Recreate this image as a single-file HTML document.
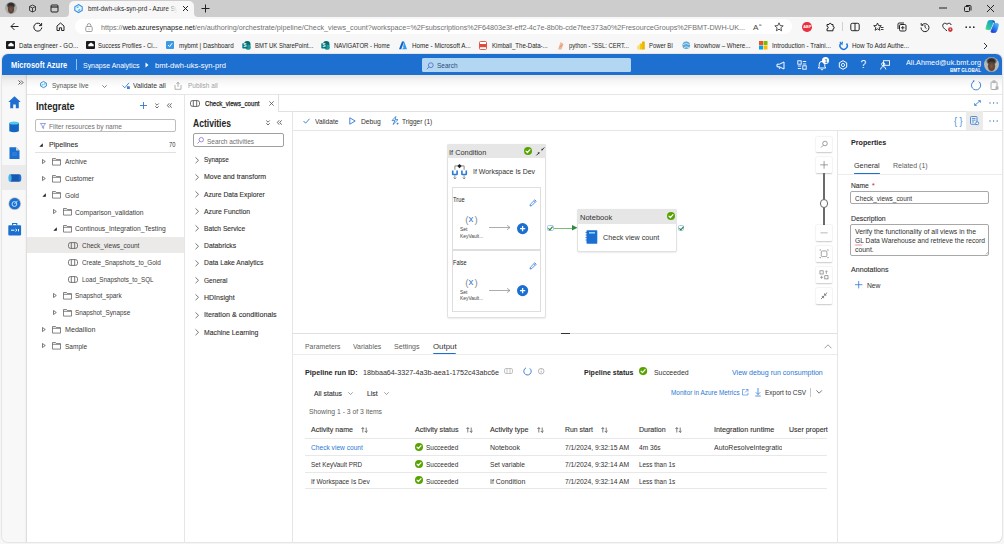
<!DOCTYPE html>
<html><head><meta charset="utf-8"><style>
html,body{margin:0;padding:0;}
body{width:1004px;height:544px;position:relative;overflow:hidden;background:#f7f7f7;font-family:"Liberation Sans",sans-serif;}
span{position:absolute;white-space:pre;}
svg{overflow:visible}
</style></head><body>
<div style="position:absolute;left:0px;top:0px;width:1004px;height:16.5px;background:#cdcdcd;"></div>
<div style="position:absolute;left:64px;top:12px;width:135px;height:5px;background:#f7f7f7;"></div>
<div style="position:absolute;left:60px;top:8px;width:9.2px;height:8.5px;background:#cdcdcd;border-bottom-right-radius:4px"></div>
<div style="position:absolute;left:194px;top:8px;width:9.2px;height:8.5px;background:#cdcdcd;border-bottom-left-radius:4px"></div>
<div style="position:absolute;left:69.2px;top:1px;width:124.8px;height:16px;background:#f7f7f7;border-radius:5px 5px 0 0"></div>
<div style="position:absolute;left:5px;top:2px;width:12px;height:12px;border-radius:50%;background:radial-gradient(ellipse 30% 40% at 50% 62%,#7a5a48 0,#5a4032 70%,rgba(90,64,50,0) 100%),radial-gradient(ellipse 40% 30% at 50% 28%,#222 0,#333 60%,rgba(50,50,50,0) 100%),#a9aca9"></div>
<svg style="position:absolute;left:28px;top:4px;" width="9" height="9" viewBox="0 0 9 9" fill="none"><path d="M1.5 2.5 L4.5 1 L7.5 2.5 L7.5 6.5 L4.5 8 L1.5 6.5 Z M1.5 2.5 L4.5 4 L7.5 2.5 M4.5 4 L4.5 8" stroke="#333" stroke-width="0.9"/></svg>
<svg style="position:absolute;left:50px;top:4px;" width="9" height="9" viewBox="0 0 9 9" fill="none"><rect x="1" y="1" width="7" height="7" rx="1" stroke="#222" stroke-width="1"/><path d="M1 3 H8" stroke="#222" stroke-width="1.2"/></svg>
<svg style="position:absolute;left:73.8px;top:3.6px;" width="9" height="9.2" viewBox="0 0 9 9.2" fill="none"><path d="M4.5 0.6 L8.2 2.7 L8.2 6.5 L4.5 8.6 L0.8 6.5 L0.8 2.7 Z" stroke="#3b8fe0" stroke-width="1.1" fill="#e8f6fd"/><path d="M2.8 3.6 L4.6 2.8 M4.2 6.4 L6.2 5.4" stroke="#22b4ea" stroke-width="1.1"/></svg>
<svg style="position:absolute;left:182px;top:5px;" width="7" height="7" viewBox="0 0 7 7" fill="none"><path d="M1 1 L6 6 M6 1 L1 6" stroke="#222" stroke-width="1"/></svg>
<svg style="position:absolute;left:201px;top:4px;" width="9" height="9" viewBox="0 0 9 9" fill="none"><path d="M4.5 0.5 V8.5 M0.5 4.5 H8.5" stroke="#222" stroke-width="1"/></svg>
<svg style="position:absolute;left:938px;top:5px;" width="10" height="6" viewBox="0 0 10 6" fill="none"><path d="M1 3 H9" stroke="#222" stroke-width="1"/></svg>
<svg style="position:absolute;left:963px;top:4px;" width="9" height="9" viewBox="0 0 9 9" fill="none"><rect x="1.5" y="2.5" width="5" height="5" rx="1" stroke="#222" stroke-width="1"/><path d="M3 1.5 H7 Q8 1.5 8 2.5 V6.5" stroke="#222" stroke-width="1"/></svg>
<svg style="position:absolute;left:986px;top:4px;" width="9" height="9" viewBox="0 0 9 9" fill="none"><path d="M1 1 L8 8 M8 1 L1 8" stroke="#222" stroke-width="1"/></svg>
<svg style="position:absolute;left:10px;top:22px;" width="9" height="9" viewBox="0 0 9 9" fill="none"><path d="M8.5 4.5 H1 M4.5 1 L1 4.5 L4.5 8" stroke="#222" stroke-width="1"/></svg>
<svg style="position:absolute;left:33px;top:22px;" width="10" height="10" viewBox="0 0 10 10" fill="none"><path d="M8.3 3.2 A4 4 0 1 0 8.8 5.5" stroke="#222" stroke-width="1"/><path d="M8.6 1 V3.6 H6" stroke="#222" stroke-width="1"/></svg>
<svg style="position:absolute;left:56px;top:22px;" width="9" height="9" viewBox="0 0 9 9" fill="none"><path d="M1 4 L4.5 1 L8 4 V8.5 H5.6 V5.8 H3.4 V8.5 H1 Z" stroke="#222" stroke-width="1" stroke-linejoin="round"/></svg>
<div style="position:absolute;left:75.3px;top:19px;width:717px;height:15px;background:#ffffff;border-radius:8px"></div>
<svg style="position:absolute;left:85px;top:23px;" width="8" height="9" viewBox="0 0 8 9" fill="none"><rect x="0.8" y="3.5" width="6.4" height="5" rx="1" stroke="#888" stroke-width="0.8"/><path d="M2.2 3.5 V2.4 A1.8 1.8 0 0 1 5.8 2.4 V3.5" stroke="#888" stroke-width="0.8"/><circle cx="4" cy="6" r="0.5" fill="#888"/></svg>
<svg style="position:absolute;left:774px;top:22px;" width="10" height="10" viewBox="0 0 10 10" fill="none"><path d="M5 0.8 L6.2 3.6 L9.2 3.8 L6.9 5.8 L7.6 8.8 L5 7.2 L2.4 8.8 L3.1 5.8 L0.8 3.8 L3.8 3.6 Z" stroke="#444" stroke-width="0.9" stroke-linejoin="round"/></svg>
<div style="position:absolute;left:802px;top:22px;width:9.5px;height:9.5px;border-radius:50%;background:#e8313f"></div>
<svg style="position:absolute;left:825px;top:21.5px;" width="10" height="10" viewBox="0 0 10 10" fill="none"><path d="M2 2.5 H4 A1.2 1.2 0 0 1 6.4 2.5 H8 V4.5 A1.2 1.2 0 0 1 8 6.9 V8.8 H2 V6.8 A1.2 1.2 0 0 0 2 4.4 Z" stroke="#222" stroke-width="1"/></svg>
<div style="position:absolute;left:842px;top:22px;width:1px;height:9px;background:#d0d0d0;"></div>
<svg style="position:absolute;left:849.5px;top:22px;" width="10" height="10" viewBox="0 0 10 10" fill="none"><rect x="0.8" y="1.3" width="8.4" height="7.4" rx="1.5" stroke="#222" stroke-width="1"/><path d="M5 1.3 V8.7" stroke="#222" stroke-width="1"/></svg>
<svg style="position:absolute;left:873px;top:21.5px;" width="11" height="10" viewBox="0 0 11 10" fill="none"><path d="M4.5 1 L5.6 3.5 L8.3 3.7 L6.2 5.5 L6.9 8.3 L4.5 6.8 L2.1 8.3 L2.8 5.5 L0.7 3.7 L3.4 3.5 Z" stroke="#222" stroke-width="0.9" stroke-linejoin="round"/><path d="M7.5 5.5 H10.5 M8 7.5 H10.5" stroke="#222" stroke-width="0.9"/></svg>
<svg style="position:absolute;left:896.5px;top:21.5px;" width="10" height="10" viewBox="0 0 10 10" fill="none"><rect x="2.5" y="2.5" width="6.5" height="6.5" rx="1.3" stroke="#222" stroke-width="1"/><path d="M1 7 V2.2 Q1 1 2.2 1 H7" stroke="#222" stroke-width="1"/><path d="M5.75 4 V7.5 M4 5.75 H7.5" stroke="#222" stroke-width="0.9"/></svg>
<svg style="position:absolute;left:919.5px;top:21.5px;" width="10" height="10" viewBox="0 0 10 10" fill="none"><path d="M2 3 A4 4 0 1 1 1 5.5" stroke="#222" stroke-width="1"/><path d="M1.2 1 V3.3 H3.4" stroke="#222" stroke-width="0.9"/><path d="M5 3 V5.3 L6.5 6.5" stroke="#222" stroke-width="0.9"/></svg>
<svg style="position:absolute;left:942px;top:21.5px;" width="11" height="10" viewBox="0 0 11 10" fill="none"><path d="M5 8.8 C1 6 0.5 4.5 0.8 3 C1.2 1 3.6 0.6 5 2.3 C6.4 0.6 8.8 1 9.2 3" stroke="#222" stroke-width="1"/><circle cx="8.3" cy="7.6" r="2.3" fill="#d13438"/><path d="M8.3 6.5 V8 " stroke="#fff" stroke-width="0.8"/></svg>
<svg style="position:absolute;left:965px;top:25.5px;" width="10" height="3" viewBox="0 0 10 3" fill="none"><circle cx="1.2" cy="1.2" r="0.85" fill="#222"/><circle cx="5" cy="1.2" r="0.85" fill="#222"/><circle cx="8.8" cy="1.2" r="0.85" fill="#222"/></svg>
<svg style="position:absolute;left:985px;top:20px;" width="14" height="13" viewBox="0 0 14 13" fill="none"><defs><linearGradient id="cp1" x1="0.8" y1="0" x2="0.1" y2="1"><stop offset="0" stop-color="#1596d8"/><stop offset="1" stop-color="#3ad68c"/></linearGradient><linearGradient id="cp2" x1="0.9" y1="0.1" x2="0.2" y2="1"><stop offset="0" stop-color="#46b8f5"/><stop offset="0.6" stop-color="#2a72ec"/><stop offset="1" stop-color="#1a3fd0"/></linearGradient></defs><path d="M1.2 7.6 C0.6 9.2 1.4 9.6 2.6 9.6 H5.2 L8.2 2 C8.6 0.9 8.1 0.6 7.2 0.6 H4.6 C3.6 0.6 3.2 1 2.8 2.2 Z" fill="url(#cp1)" stroke="url(#cp1)" stroke-width="0.9"/><path d="M13.3 5.6 C13.9 4 13.1 3.4 11.9 3.4 H9.2 L6.2 11 C5.8 12.1 6.3 12.4 7.2 12.4 H9.8 C10.8 12.4 11.3 12 11.7 10.8 Z" fill="url(#cp2)" stroke="url(#cp2)" stroke-width="0.9"/><path d="M7.2 0.6 H8.6 C9.6 0.6 10.2 1.6 9.6 3.4 H9.2 L8.2 2 Z" fill="#0d4fa0"/></svg>
<div style="position:absolute;left:6.2px;top:40.8px;width:8.8px;height:8.2px;background:#1b1b1b;border-radius:1px"></div>
<svg style="position:absolute;left:7.7px;top:42.3px;" width="6" height="5" viewBox="0 0 6 5" fill="none"><path d="M0.3 4.2 H5.7 V2.6 L4.3 1.6 L3 0.4 L1.7 1.6 L0.3 2.6 Z" fill="#fff"/></svg>
<div style="position:absolute;left:86px;top:40.8px;width:8.8px;height:8.2px;background:#1b1b1b;border-radius:1px"></div>
<svg style="position:absolute;left:87.5px;top:42.3px;" width="6" height="5" viewBox="0 0 6 5" fill="none"><path d="M0.3 4.2 H5.7 V2.6 L4.3 1.6 L3 0.4 L1.7 1.6 L0.3 2.6 Z" fill="#fff"/></svg>
<div style="position:absolute;left:166.2px;top:40.8px;width:8px;height:8px;background:#3b9ae8;border-radius:1px"></div>
<svg style="position:absolute;left:167.2px;top:41.8px;" width="6" height="6" viewBox="0 0 6 6" fill="none"><path d="M1 3 L2.6 4.6 L5.2 1.2" stroke="#fff" stroke-width="1"/></svg>
<svg style="position:absolute;left:241.5px;top:40.5px;" width="9" height="9" viewBox="0 0 9 9" fill="none"><circle cx="5.3" cy="3.3" r="3.2" fill="#036c70"/><circle cx="6.2" cy="6.2" r="2.6" fill="#1a9ba1"/><rect x="0.3" y="2.2" width="5.2" height="5.2" rx="0.6" fill="#03787c"/><text x="2.9" y="6.3" font-size="4.5" font-family="Liberation Sans" font-weight="700" fill="#fff" text-anchor="middle">S</text></svg>
<svg style="position:absolute;left:321px;top:40.5px;" width="9" height="9" viewBox="0 0 9 9" fill="none"><circle cx="5.3" cy="3.3" r="3.2" fill="#036c70"/><circle cx="6.2" cy="6.2" r="2.6" fill="#1a9ba1"/><rect x="0.3" y="2.2" width="5.2" height="5.2" rx="0.6" fill="#03787c"/><text x="2.9" y="6.3" font-size="4.5" font-family="Liberation Sans" font-weight="700" fill="#fff" text-anchor="middle">S</text></svg>
<svg style="position:absolute;left:398.6px;top:40.5px;" width="8" height="8.5" viewBox="0 0 8 8.5" fill="none"><path d="M3 0.5 H5.2 L2.2 8.3 H0 Z" fill="#0a64c8"/><path d="M5.2 0.5 L8 8.3 H2.8 L5 6.5 H4 Z" fill="#2e9bf0"/></svg>
<svg style="position:absolute;left:479px;top:40.5px;" width="8" height="9" viewBox="0 0 8 9" fill="none"><rect x="0.5" y="0.5" width="7" height="8" rx="1" fill="#fff" stroke="#e04b3a" stroke-width="0.9"/><rect x="0.5" y="3" width="7" height="3.2" fill="#e04b3a"/></svg>
<svg style="position:absolute;left:556.7px;top:40.5px;" width="7" height="9" viewBox="0 0 7 9" fill="none"><path d="M1 8.5 L3.5 1 L6.5 3 L4.5 8.5 Z" fill="#f0b89a"/><path d="M2.5 6 L5.5 4" stroke="#e08060" stroke-width="0.8"/></svg>
<svg style="position:absolute;left:637.4px;top:40.5px;" width="8" height="9" viewBox="0 0 8 9" fill="none"><rect x="5" y="0.5" width="2.8" height="8" rx="0.5" fill="#e8b400"/><rect x="2.6" y="2.5" width="2.8" height="6" rx="0.5" fill="#f2c811"/><rect x="0.2" y="4.5" width="2.8" height="4" rx="0.5" fill="#f8de6a"/></svg>
<svg style="position:absolute;left:682px;top:40.5px;" width="8.5" height="8.5" viewBox="0 0 8.5 8.5" fill="none"><circle cx="4.25" cy="4.25" r="3.8" fill="#5aa7d8"/><path d="M1 3.5 Q4 1.5 7.5 3.5 M2 6.5 Q4.5 5 7 6.8" stroke="#dff0fb" stroke-width="0.8"/></svg>
<svg style="position:absolute;left:759px;top:40.5px;" width="8.5" height="8.5" viewBox="0 0 8.5 8.5" fill="none"><rect x="0" y="0" width="4" height="4" fill="#f25022"/><rect x="4.5" y="0" width="4" height="4" fill="#7fba00"/><rect x="0" y="4.5" width="4" height="4" fill="#00a4ef"/><rect x="4.5" y="4.5" width="4" height="4" fill="#ffb900"/></svg>
<svg style="position:absolute;left:839px;top:40.5px;" width="9" height="9" viewBox="0 0 9 9" fill="none"><path d="M7.5 2.5 A3.6 3.6 0 1 1 2.2 2" stroke="#1f7ae0" stroke-width="1.5"/><path d="M0.8 0.8 L3 3.2 L3.5 0.6" stroke="#1f7ae0" stroke-width="1.1"/></svg>
<svg style="position:absolute;left:983px;top:41.5px;" width="5" height="8" viewBox="0 0 5 8" fill="none"><path d="M1 1 L4 4 L1 7" stroke="#333" stroke-width="1"/></svg>
<div style="position:absolute;left:2px;top:54px;width:1000px;height:488px;background:#ffffff;border-radius:6px;box-shadow:0 0 1.5px rgba(0,0,0,0.35)"></div>
<div style="position:absolute;left:2px;top:54px;width:1000px;height:21px;background:#1d6fd0;border-radius:6px 6px 0 0"></div>
<div style="position:absolute;left:75.6px;top:59.4px;width:0.9px;height:10.7px;background:rgba(255,255,255,0.55);"></div>
<svg style="position:absolute;left:144.5px;top:62.3px;" width="4" height="6" viewBox="0 0 4 6" fill="none"><path d="M0.5 0.5 L3.5 3 L0.5 5.5 Z" fill="#fff"/></svg>
<div style="position:absolute;left:421.5px;top:58px;width:209px;height:13.6px;background:#b3d6f2;border-radius:1.5px"></div>
<svg style="position:absolute;left:425.5px;top:61.5px;" width="8" height="8" viewBox="0 0 8 8" fill="none"><circle cx="4.8" cy="3.2" r="2.4" stroke="#5b6fd0" stroke-width="0.9"/><path d="M3.1 4.9 L0.8 7.2" stroke="#5b6fd0" stroke-width="0.9"/></svg>
<svg style="position:absolute;left:776px;top:60.5px;" width="10" height="9" viewBox="0 0 10 9" fill="none"><path d="M1 3.2 H3.5 L8 1 V8 L3.5 5.8 H1 Z" stroke="#fff" stroke-width="1" stroke-linejoin="round"/><path d="M3 5.8 L3.8 8" stroke="#fff" stroke-width="0.9"/></svg>
<svg style="position:absolute;left:797px;top:60px;" width="10" height="10" viewBox="0 0 10 10" fill="none"><rect x="0.8" y="0.8" width="3.4" height="3.4" stroke="#fff" stroke-width="0.9"/><rect x="5.8" y="5.8" width="3.4" height="3.4" stroke="#fff" stroke-width="0.9"/><path d="M0.8 6 H4.2 M0.8 8.5 H4.2 M5.8 1.5 H9.2 M5.8 4 H9.2" stroke="#fff" stroke-width="0.9"/></svg>
<svg style="position:absolute;left:817px;top:60px;" width="10" height="11" viewBox="0 0 10 11" fill="none"><path d="M1.2 8 H8.8 L7.8 6.5 V4.2 A2.8 2.8 0 0 0 2.2 4.2 V6.5 Z" stroke="#fff" stroke-width="1" stroke-linejoin="round"/><path d="M3.8 9.3 Q5 10.6 6.2 9.3" stroke="#fff" stroke-width="0.9"/></svg>
<div style="position:absolute;left:822.4px;top:57.4px;width:7px;height:7px;border-radius:50%;background:#fff"></div>
<svg style="position:absolute;left:838px;top:60px;" width="10" height="10" viewBox="0 0 10 10" fill="none"><path d="M5 0.7 L8.7 2.8 V7.2 L5 9.3 L1.3 7.2 V2.8 Z" stroke="#fff" stroke-width="1"/><circle cx="5" cy="5" r="1.6" stroke="#fff" stroke-width="0.9"/></svg>
<svg style="position:absolute;left:879.5px;top:60px;" width="10" height="10" viewBox="0 0 10 10" fill="none"><rect x="3.5" y="0.7" width="6" height="4.6" stroke="#fff" stroke-width="0.9"/><circle cx="3.2" cy="4.2" r="1.6" stroke="#fff" stroke-width="0.9"/><path d="M0.5 9.5 Q1 6.5 3.2 6.5 Q5.4 6.5 5.9 9.5" stroke="#fff" stroke-width="0.9"/></svg>
<div style="position:absolute;left:984px;top:56.5px;width:15px;height:15px;border-radius:50%;background:radial-gradient(ellipse 28% 38% at 50% 62%,#7d5c48 0,#5a4032 70%,rgba(90,64,50,0) 100%),radial-gradient(ellipse 38% 28% at 50% 28%,#222 0,#333 60%,rgba(50,50,50,0) 100%),#b7b9b6"></div>
<div style="position:absolute;left:26px;top:94px;width:976px;height:1px;background:#e6e6e6;"></div>
<div style="position:absolute;left:2px;top:75px;width:24.5px;height:467px;background:#f8f8f8;border-radius:0 0 0 6px;box-shadow:inset -1px 0 0 #dedede, inset -2.5px 0 1.5px -1px rgba(0,0,0,0.05)"></div>
<div style="position:absolute;left:2px;top:75px;width:1000px;height:13px;background:linear-gradient(rgba(90,60,30,0.12),rgba(0,0,0,0.09) 12%,rgba(0,0,0,0.035) 45%,rgba(0,0,0,0))"></div>
<svg style="position:absolute;left:18px;top:80.3px;" width="6" height="5" viewBox="0 0 6 5" fill="none"><path d="M0.5 0.5 L2.5 2.5 L0.5 4.5 M3 0.5 L5 2.5 L3 4.5" stroke="#555" stroke-width="1"/></svg>
<svg style="position:absolute;left:40.3px;top:80.8px;" width="7" height="7.2" viewBox="0 0 7 7.2" fill="none"><path d="M3.5 0.5 L6.4 2.1 L6.4 5.1 L3.5 6.7 L0.6 5.1 L0.6 2.1 Z" stroke="#3a80d8" stroke-width="0.9" fill="#e4f5fc"/><path d="M1.6 4.3 L3 3.7 M3.6 3.4 L5.4 2.6" stroke="#2cc0ea" stroke-width="1"/></svg>
<svg style="position:absolute;left:101.7px;top:85px;" width="5" height="3" viewBox="0 0 5 3" fill="none"><path d="M0.3 0.3 L2.5 2.5 L4.7 0.3" stroke="#666" stroke-width="0.8"/></svg>
<svg style="position:absolute;left:122px;top:81.5px;" width="8" height="7" viewBox="0 0 8 7" fill="none"><path d="M0.5 3.5 L2.8 5.8 L7 0.8" stroke="#3a7bd5" stroke-width="0.9"/><rect x="5" y="4.3" width="2.8" height="2.7" fill="#3a7bd5"/></svg>
<svg style="position:absolute;left:174px;top:80.5px;" width="8" height="9" viewBox="0 0 8 9" fill="none"><path d="M2.5 3 L4 1.2 L5.5 3 M4 1.2 V6" stroke="#a19f9d" stroke-width="0.8"/><path d="M1 4 V8.3 H7 V4" stroke="#a19f9d" stroke-width="0.8"/></svg>
<svg style="position:absolute;left:971px;top:79.5px;" width="11" height="11" viewBox="0 0 11 11" fill="none"><path d="M7.8 1.6 A4.6 4.6 0 1 1 3 1.2" stroke="#2b78d4" stroke-width="0.9"/><path d="M2.6 0 L3.1 1.3 L1.7 1.9" stroke="#2b78d4" stroke-width="0.8"/></svg>
<svg style="position:absolute;left:989.5px;top:80px;" width="9" height="10" viewBox="0 0 9 10" fill="none"><rect x="1" y="2" width="6" height="7.5" rx="0.8" stroke="#a0a0a0" stroke-width="0.9"/><rect x="3" y="0.8" width="2" height="1.8" stroke="#a0a0a0" stroke-width="0.7"/><rect x="5.5" y="6.5" width="3" height="3" fill="#b0b0b0"/></svg>
<svg style="position:absolute;left:8.3px;top:96.2px;" width="13" height="12.4" viewBox="0 0 13 12.4" fill="none"><path d="M6.5 0.3 L12.7 6 H10.8 V12.2 H7.8 V8.5 H5.2 V12.2 H2.2 V6 H0.3 Z" fill="#1f6fd0"/></svg>
<svg style="position:absolute;left:9.4px;top:121.4px;" width="10.2" height="12" viewBox="0 0 10.2 12" fill="none"><path d="M0.3 2 V10.2 Q5.1 12.2 9.9 10.2 V2 Z" fill="#1466c0"/><ellipse cx="5.1" cy="2" rx="4.8" ry="1.6" fill="#50c8f0"/></svg>
<svg style="position:absolute;left:9px;top:146.6px;" width="11" height="12.4" viewBox="0 0 11 12.4" fill="none"><path d="M0.5 0.3 H7 L10.5 3.5 V12.1 H0.5 Z" fill="#1a6fd0"/><path d="M7 0.3 V3.5 H10.5 Z" fill="#cfcfcf"/><path d="M3 6 H8 M3 8 H8" stroke="#4d95e3" stroke-width="0.7"/></svg>
<div style="position:absolute;left:2px;top:165.1px;width:24px;height:25px;background:#ebebeb;"></div>
<svg style="position:absolute;left:7.5px;top:172.5px;" width="14" height="10" viewBox="0 0 14 10" fill="none"><rect x="2" y="1.2" width="10" height="7.6" rx="1" fill="#1659b0"/><ellipse cx="2" cy="5" rx="1.6" ry="3.8" fill="#46b4ec"/><ellipse cx="12" cy="5" rx="1.3" ry="3.6" fill="#1f6fd0"/></svg>
<svg style="position:absolute;left:8px;top:196.8px;" width="13.4" height="13.4" viewBox="0 0 13.4 13.4" fill="none"><circle cx="6.7" cy="6.7" r="6.4" fill="#6b6b6b" opacity="0.35"/><circle cx="6.7" cy="6.7" r="5.6" fill="#1a6fd0"/><circle cx="6.4" cy="7" r="2.4" stroke="#bfe2fb" stroke-width="1"/><path d="M6.4 7 L9.6 3.8" stroke="#bfe2fb" stroke-width="1"/></svg>
<svg style="position:absolute;left:8px;top:222.5px;" width="13.4" height="12.6" viewBox="0 0 13.4 12.6" fill="none"><path d="M4.6 2.2 V0.5 H8.8 V2.2" stroke="#1a6fd0" stroke-width="1.1"/><rect x="0.3" y="2.2" width="12.8" height="10.2" rx="0.8" fill="#1a6fd0"/><path d="M3 7.2 H6.5 M7.5 6 L9 7.2 L7.5 8.4 M10.5 6 V8.4" stroke="#fff" stroke-width="1"/></svg>
<div style="position:absolute;left:183.8px;top:94px;width:1px;height:448px;background:#e6e6e6;"></div>
<svg style="position:absolute;left:140.2px;top:102.3px;" width="7" height="7" viewBox="0 0 7 7" fill="none"><path d="M3.5 0 V7 M0 3.5 H7" stroke="#2b78d4" stroke-width="0.9"/></svg>
<svg style="position:absolute;left:154.5px;top:103px;" width="4" height="6" viewBox="0 0 4 6" fill="none"><path d="M0.3 0.5 L2 2.2 L3.7 0.5 M0.3 3.3 L2 5 L3.7 3.3" stroke="#444" stroke-width="0.8"/></svg>
<svg style="position:absolute;left:167px;top:103.2px;" width="5" height="5" viewBox="0 0 5 5" fill="none"><path d="M2.2 0.3 L0.4 2.5 L2.2 4.7 M4.6 0.3 L2.8 2.5 L4.6 4.7" stroke="#444" stroke-width="0.8"/></svg>
<div style="position:absolute;left:35.4px;top:118.6px;width:140.2px;height:13.9px;background:#fff;border:1px solid #bdbdbd;border-radius:2px;box-sizing:border-box"></div>
<svg style="position:absolute;left:39.7px;top:122.6px;" width="6" height="6" viewBox="0 0 6 6" fill="none"><path d="M0.4 0.5 H5.6 L3.6 3 V5.5 L2.4 4.8 V3 Z" stroke="#6a7ad8" stroke-width="0.7" stroke-linejoin="round"/></svg>
<svg style="position:absolute;left:38.5px;top:143px;" width="4" height="4" viewBox="0 0 4 4" fill="none"><path d="M3.8 0.3 V3.8 H0.3 Z" fill="#222"/></svg>
<div style="position:absolute;left:35.4px;top:152px;width:140.2px;height:0.8px;background:#e1e1e1;"></div>
<div style="position:absolute;left:26.8px;top:236.6px;width:157px;height:16.2px;background:#ebeae9;"></div>
<svg style="position:absolute;left:42px;top:158.9px;" width="4" height="5" viewBox="0 0 4 5" fill="none"><path d="M0.5 0.5 L3.3 2.5 L0.5 4.5 Z" stroke="#444" stroke-width="0.7" stroke-linejoin="round"/></svg>
<svg style="position:absolute;left:52.2px;top:157.6px;" width="9" height="7.6" viewBox="0 0 9 7.6" fill="none"><path d="M0.5 0.5 H3.5 L4.5 1.6 H8.5 V7.1 H0.5 Z M0.5 2.3 H8.5" stroke="#5c5c5c" stroke-width="0.75" stroke-linejoin="round"/></svg>
<svg style="position:absolute;left:42px;top:176.0px;" width="4" height="5" viewBox="0 0 4 5" fill="none"><path d="M0.5 0.5 L3.3 2.5 L0.5 4.5 Z" stroke="#444" stroke-width="0.7" stroke-linejoin="round"/></svg>
<svg style="position:absolute;left:52.2px;top:174.7px;" width="9" height="7.6" viewBox="0 0 9 7.6" fill="none"><path d="M0.5 0.5 H3.5 L4.5 1.6 H8.5 V7.1 H0.5 Z M0.5 2.3 H8.5" stroke="#5c5c5c" stroke-width="0.75" stroke-linejoin="round"/></svg>
<svg style="position:absolute;left:42px;top:193px;" width="4" height="4" viewBox="0 0 4 4" fill="none"><path d="M3.8 0.3 V3.8 H0.3 Z" fill="#222"/></svg>
<svg style="position:absolute;left:52.2px;top:191.2px;" width="9" height="7.6" viewBox="0 0 9 7.6" fill="none"><path d="M0.5 0.5 H3.5 L4.5 1.6 H8.5 V7.1 H0.5 Z M0.5 2.3 H8.5" stroke="#5c5c5c" stroke-width="0.75" stroke-linejoin="round"/></svg>
<svg style="position:absolute;left:52.8px;top:209.3px;" width="4" height="5" viewBox="0 0 4 5" fill="none"><path d="M0.5 0.5 L3.3 2.5 L0.5 4.5 Z" stroke="#444" stroke-width="0.7" stroke-linejoin="round"/></svg>
<svg style="position:absolute;left:62.5px;top:208.0px;" width="9" height="7.6" viewBox="0 0 9 7.6" fill="none"><path d="M0.5 0.5 H3.5 L4.5 1.6 H8.5 V7.1 H0.5 Z M0.5 2.3 H8.5" stroke="#5c5c5c" stroke-width="0.75" stroke-linejoin="round"/></svg>
<svg style="position:absolute;left:52.8px;top:226.5px;" width="4" height="4" viewBox="0 0 4 4" fill="none"><path d="M3.8 0.3 V3.8 H0.3 Z" fill="#222"/></svg>
<svg style="position:absolute;left:62.5px;top:224.7px;" width="9" height="7.6" viewBox="0 0 9 7.6" fill="none"><path d="M0.5 0.5 H3.5 L4.5 1.6 H8.5 V7.1 H0.5 Z M0.5 2.3 H8.5" stroke="#5c5c5c" stroke-width="0.75" stroke-linejoin="round"/></svg>
<svg style="position:absolute;left:68.2px;top:241.8px;" width="10" height="7" viewBox="0 0 10 7" fill="none"><rect x="0.5" y="0.6" width="9" height="5.8" rx="2" stroke="#555" stroke-width="0.8"/><path d="M3.3 0.6 V6.4 M6.7 0.6 V6.4" stroke="#555" stroke-width="0.8"/></svg>
<svg style="position:absolute;left:68.2px;top:258.7px;" width="10" height="7" viewBox="0 0 10 7" fill="none"><rect x="0.5" y="0.6" width="9" height="5.8" rx="2" stroke="#555" stroke-width="0.8"/><path d="M3.3 0.6 V6.4 M6.7 0.6 V6.4" stroke="#555" stroke-width="0.8"/></svg>
<svg style="position:absolute;left:68.2px;top:275.5px;" width="10" height="7" viewBox="0 0 10 7" fill="none"><rect x="0.5" y="0.6" width="9" height="5.8" rx="2" stroke="#555" stroke-width="0.8"/><path d="M3.3 0.6 V6.4 M6.7 0.6 V6.4" stroke="#555" stroke-width="0.8"/></svg>
<svg style="position:absolute;left:52.8px;top:293.0px;" width="4" height="5" viewBox="0 0 4 5" fill="none"><path d="M0.5 0.5 L3.3 2.5 L0.5 4.5 Z" stroke="#444" stroke-width="0.7" stroke-linejoin="round"/></svg>
<svg style="position:absolute;left:62.5px;top:291.7px;" width="9" height="7.6" viewBox="0 0 9 7.6" fill="none"><path d="M0.5 0.5 H3.5 L4.5 1.6 H8.5 V7.1 H0.5 Z M0.5 2.3 H8.5" stroke="#5c5c5c" stroke-width="0.75" stroke-linejoin="round"/></svg>
<svg style="position:absolute;left:52.8px;top:309.8px;" width="4" height="5" viewBox="0 0 4 5" fill="none"><path d="M0.5 0.5 L3.3 2.5 L0.5 4.5 Z" stroke="#444" stroke-width="0.7" stroke-linejoin="round"/></svg>
<svg style="position:absolute;left:62.5px;top:308.5px;" width="9" height="7.6" viewBox="0 0 9 7.6" fill="none"><path d="M0.5 0.5 H3.5 L4.5 1.6 H8.5 V7.1 H0.5 Z M0.5 2.3 H8.5" stroke="#5c5c5c" stroke-width="0.75" stroke-linejoin="round"/></svg>
<svg style="position:absolute;left:42px;top:326.8px;" width="4" height="5" viewBox="0 0 4 5" fill="none"><path d="M0.5 0.5 L3.3 2.5 L0.5 4.5 Z" stroke="#444" stroke-width="0.7" stroke-linejoin="round"/></svg>
<svg style="position:absolute;left:52.2px;top:325.5px;" width="9" height="7.6" viewBox="0 0 9 7.6" fill="none"><path d="M0.5 0.5 H3.5 L4.5 1.6 H8.5 V7.1 H0.5 Z M0.5 2.3 H8.5" stroke="#5c5c5c" stroke-width="0.75" stroke-linejoin="round"/></svg>
<svg style="position:absolute;left:42px;top:343.3px;" width="4" height="5" viewBox="0 0 4 5" fill="none"><path d="M0.5 0.5 L3.3 2.5 L0.5 4.5 Z" stroke="#444" stroke-width="0.7" stroke-linejoin="round"/></svg>
<svg style="position:absolute;left:52.2px;top:342.0px;" width="9" height="7.6" viewBox="0 0 9 7.6" fill="none"><path d="M0.5 0.5 H3.5 L4.5 1.6 H8.5 V7.1 H0.5 Z M0.5 2.3 H8.5" stroke="#5c5c5c" stroke-width="0.75" stroke-linejoin="round"/></svg>
<div style="position:absolute;left:278.3px;top:94px;width:0.9px;height:17.2px;background:#e1e1e1;"></div>
<div style="position:absolute;left:278.3px;top:110.8px;width:724px;height:0.9px;background:#e1e1e1;"></div>
<svg style="position:absolute;left:190.2px;top:99.8px;" width="10" height="7" viewBox="0 0 10 7" fill="none"><rect x="0.5" y="0.6" width="9" height="5.8" rx="2" stroke="#444" stroke-width="0.8"/><path d="M3.3 0.6 V6.4 M6.7 0.6 V6.4" stroke="#444" stroke-width="0.8"/></svg>
<svg style="position:absolute;left:268.8px;top:100.5px;" width="5" height="5" viewBox="0 0 5 5" fill="none"><path d="M0.3 0.3 L4.7 4.7 M4.7 0.3 L0.3 4.7" stroke="#555" stroke-width="0.8"/></svg>
<svg style="position:absolute;left:973.5px;top:100px;" width="7" height="6" viewBox="0 0 7 6" fill="none"><path d="M0.8 5.2 L6.2 0.8 M0.6 3.2 V5.4 H2.8 M4.2 0.6 H6.4 V2.8" stroke="#2b78d4" stroke-width="0.8"/></svg>
<svg style="position:absolute;left:988.8px;top:102px;" width="10" height="2" viewBox="0 0 10 2" fill="none"><circle cx="1" cy="1" r="0.65" fill="#2b78d4"/><circle cx="4.6" cy="1" r="0.65" fill="#2b78d4"/><circle cx="8.2" cy="1" r="0.65" fill="#2b78d4"/></svg>
<div style="position:absolute;left:292.2px;top:111px;width:0.9px;height:431px;background:#e6e6e6;"></div>
<svg style="position:absolute;left:266.4px;top:119.8px;" width="4" height="6" viewBox="0 0 4 6" fill="none"><path d="M0.3 0.5 L2 2.2 L3.7 0.5 M0.3 3.3 L2 5 L3.7 3.3" stroke="#444" stroke-width="0.8"/></svg>
<svg style="position:absolute;left:277px;top:120.3px;" width="5" height="5" viewBox="0 0 5 5" fill="none"><path d="M2.2 0.3 L0.4 2.5 L2.2 4.7 M4.6 0.3 L2.8 2.5 L4.6 4.7" stroke="#444" stroke-width="0.8"/></svg>
<div style="position:absolute;left:193.1px;top:133.2px;width:91.4px;height:13.5px;background:#fff;border:1px solid #9f9f9f;border-radius:2px;box-sizing:border-box"></div>
<svg style="position:absolute;left:196.5px;top:136.8px;" width="7" height="7" viewBox="0 0 7 7" fill="none"><circle cx="4.3" cy="2.7" r="2.2" stroke="#8a6fd8" stroke-width="0.8"/><path d="M2.7 4.3 L0.5 6.5" stroke="#8a6fd8" stroke-width="0.8"/></svg>
<svg style="position:absolute;left:195.2px;top:156.5px;" width="4.5" height="7" viewBox="0 0 4.5 7" fill="none"><path d="M0.5 0.4 L3.5 3.3 L0.5 6.2" stroke="#555" stroke-width="0.8"/></svg>
<svg style="position:absolute;left:195.2px;top:173.6px;" width="4.5" height="7" viewBox="0 0 4.5 7" fill="none"><path d="M0.5 0.4 L3.5 3.3 L0.5 6.2" stroke="#555" stroke-width="0.8"/></svg>
<svg style="position:absolute;left:195.2px;top:191.0px;" width="4.5" height="7" viewBox="0 0 4.5 7" fill="none"><path d="M0.5 0.4 L3.5 3.3 L0.5 6.2" stroke="#555" stroke-width="0.8"/></svg>
<svg style="position:absolute;left:195.2px;top:208.2px;" width="4.5" height="7" viewBox="0 0 4.5 7" fill="none"><path d="M0.5 0.4 L3.5 3.3 L0.5 6.2" stroke="#555" stroke-width="0.8"/></svg>
<svg style="position:absolute;left:195.2px;top:225.29999999999998px;" width="4.5" height="7" viewBox="0 0 4.5 7" fill="none"><path d="M0.5 0.4 L3.5 3.3 L0.5 6.2" stroke="#555" stroke-width="0.8"/></svg>
<svg style="position:absolute;left:195.2px;top:242.6px;" width="4.5" height="7" viewBox="0 0 4.5 7" fill="none"><path d="M0.5 0.4 L3.5 3.3 L0.5 6.2" stroke="#555" stroke-width="0.8"/></svg>
<svg style="position:absolute;left:195.2px;top:259.9px;" width="4.5" height="7" viewBox="0 0 4.5 7" fill="none"><path d="M0.5 0.4 L3.5 3.3 L0.5 6.2" stroke="#555" stroke-width="0.8"/></svg>
<svg style="position:absolute;left:195.2px;top:277.2px;" width="4.5" height="7" viewBox="0 0 4.5 7" fill="none"><path d="M0.5 0.4 L3.5 3.3 L0.5 6.2" stroke="#555" stroke-width="0.8"/></svg>
<svg style="position:absolute;left:195.2px;top:294.4px;" width="4.5" height="7" viewBox="0 0 4.5 7" fill="none"><path d="M0.5 0.4 L3.5 3.3 L0.5 6.2" stroke="#555" stroke-width="0.8"/></svg>
<svg style="position:absolute;left:195.2px;top:311.7px;" width="4.5" height="7" viewBox="0 0 4.5 7" fill="none"><path d="M0.5 0.4 L3.5 3.3 L0.5 6.2" stroke="#555" stroke-width="0.8"/></svg>
<svg style="position:absolute;left:195.2px;top:329.0px;" width="4.5" height="7" viewBox="0 0 4.5 7" fill="none"><path d="M0.5 0.4 L3.5 3.3 L0.5 6.2" stroke="#555" stroke-width="0.8"/></svg>
<div style="position:absolute;left:292.2px;top:130px;width:710px;height:0.9px;background:#e6e6e6;"></div>
<svg style="position:absolute;left:302.9px;top:117.5px;" width="7" height="6" viewBox="0 0 7 6" fill="none"><path d="M0.5 3 L2.6 5.2 L6.5 0.8" stroke="#2b78d4" stroke-width="0.9"/></svg>
<svg style="position:absolute;left:349px;top:116.5px;" width="7" height="8" viewBox="0 0 7 8" fill="none"><path d="M0.8 0.8 L6.2 4 L0.8 7.2 Z" stroke="#2b78d4" stroke-width="0.9" stroke-linejoin="round"/></svg>
<svg style="position:absolute;left:390.5px;top:116px;" width="8.5" height="9" viewBox="0 0 8.5 9" fill="none"><path d="M4.8 0.5 L1 4.6 H4 L2 8.5 L7 3.6 H4.2 Z" stroke="#2b78d4" stroke-width="0.8" stroke-linejoin="round"/><path d="M6.6 6.5 V8.7 M5.5 7.6 H7.7" stroke="#2b78d4" stroke-width="0.7"/></svg>
<div style="position:absolute;left:966.3px;top:111.4px;width:16.6px;height:18.8px;background:#ebebeb;"></div>
<svg style="position:absolute;left:970.3px;top:116px;" width="9" height="9" viewBox="0 0 9 9" fill="none"><rect x="0.5" y="0.5" width="6.5" height="7.8" rx="0.8" stroke="#2b78d4" stroke-width="0.8"/><path d="M2 2.5 H5.5 M2 4.2 H5.5 M2 6 H4" stroke="#2b78d4" stroke-width="0.7"/><circle cx="7.2" cy="7.3" r="1.5" fill="#fff" stroke="#2b78d4" stroke-width="0.8"/></svg>
<svg style="position:absolute;left:988.8px;top:120px;" width="10" height="2" viewBox="0 0 10 2" fill="none"><circle cx="1" cy="1" r="0.65" fill="#2b78d4"/><circle cx="4.6" cy="1" r="0.65" fill="#2b78d4"/><circle cx="8.2" cy="1" r="0.65" fill="#2b78d4"/></svg>
<div style="position:absolute;left:446.6px;top:143.7px;width:99px;height:174px;background:#fff;border:1px solid #e1e1e1;border-radius:2px;box-sizing:border-box;box-shadow:0 0.5px 1.5px rgba(0,0,0,0.08)"></div>
<div style="position:absolute;left:446.6px;top:143.7px;width:99px;height:14px;background:#e6e6e6;border-radius:2px 2px 0 0"></div>
<svg style="position:absolute;left:523.8px;top:147.3px;" width="8" height="8" viewBox="0 0 8 8" fill="none"><circle cx="4" cy="4" r="4" fill="#57a300"/><path d="M2.0 4.08 L3.4 5.52 L6.0 2.6" stroke="#fff" stroke-width="1.20" stroke-linecap="round" stroke-linejoin="round"/></svg>
<svg style="position:absolute;left:535.5px;top:146.7px;" width="9" height="9" viewBox="0 0 9 9" fill="none"><path d="M0.4 8.4 L2.6 6.2 M8.3 0.5 L6.3 2.5" stroke="#222" stroke-width="0.9"/><path d="M3.7 5.1 L1.5 5.8 L3 7.3 Z M5.2 3.6 L7.4 2.9 L5.9 1.4 Z" fill="#222"/></svg>
<svg style="position:absolute;left:452px;top:163.5px;" width="16" height="15.5" viewBox="0 0 16 15.5" fill="none"><path d="M2.9 5.8 V1.9 H12.1 V5.8" stroke="#8a8a8a" stroke-width="1"/><path d="M7.5 0 L9.6 2.1 L7.5 4.2 L5.4 2.1 Z" fill="#1e1e1e"/><path d="M-0.1 6.4 V10 Q-0.1 11.3 1.2 11.3 H4.6 Q5.9 11.3 5.9 10 V6.4 H4.3 V9.8 H1.5 V6.4 Z" fill="#2b7ad6"/><path d="M9.1 6.4 V10 Q9.1 11.3 10.4 11.3 H13.8 Q15.1 11.3 15.1 10 V6.4 H13.5 V9.8 H10.7 V6.4 Z" fill="#2b7ad6"/><path d="M2.9 11.3 V15 M12.1 11.3 V15 M1.6 13.6 L2.9 15 L4.2 13.6 M10.8 13.6 L12.1 15 L13.4 13.6" stroke="#8a8a8a" stroke-width="0.9"/></svg>
<div style="position:absolute;left:451.6px;top:187px;width:89px;height:63px;background:#fff;border:1px solid #dedede;box-sizing:border-box"></div>
<svg style="position:absolute;left:528.8px;top:199.20000000000002px;" width="8" height="8" viewBox="0 0 8 8" fill="none"><path d="M1 7 L1.4 5.2 L5.8 0.8 L7.2 2.2 L2.8 6.6 Z" stroke="#2b78d4" stroke-width="0.8" stroke-linejoin="round"/><path d="M4.8 1.8 L6.2 3.2" stroke="#2b78d4" stroke-width="0.6"/></svg>
<svg style="position:absolute;left:489.4px;top:225.0px;" width="22" height="5" viewBox="0 0 22 5" fill="none"><path d="M0 2.5 H21 M18 0.3 L21 2.5 L18 4.7" stroke="#8a8a8a" stroke-width="0.7"/></svg>
<svg style="position:absolute;left:517px;top:222.8px;" width="11.2" height="11.2" viewBox="0 0 11.2 11.2" fill="none"><circle cx="5.6" cy="5.6" r="5.6" fill="#1a6fd0"/><path d="M5.6 3 V8.2 M3 5.6 H8.2" stroke="#fff" stroke-width="1.3"/></svg>
<div style="position:absolute;left:451.6px;top:249.7px;width:89px;height:62.7px;background:#fff;border:1px solid #dedede;box-sizing:border-box"></div>
<svg style="position:absolute;left:528.8px;top:261.7px;" width="8" height="8" viewBox="0 0 8 8" fill="none"><path d="M1 7 L1.4 5.2 L5.8 0.8 L7.2 2.2 L2.8 6.6 Z" stroke="#2b78d4" stroke-width="0.8" stroke-linejoin="round"/><path d="M4.8 1.8 L6.2 3.2" stroke="#2b78d4" stroke-width="0.6"/></svg>
<svg style="position:absolute;left:489.4px;top:287.5px;" width="22" height="5" viewBox="0 0 22 5" fill="none"><path d="M0 2.5 H21 M18 0.3 L21 2.5 L18 4.7" stroke="#8a8a8a" stroke-width="0.7"/></svg>
<svg style="position:absolute;left:517px;top:285.29999999999995px;" width="11.2" height="11.2" viewBox="0 0 11.2 11.2" fill="none"><circle cx="5.6" cy="5.6" r="5.6" fill="#1a6fd0"/><path d="M5.6 3 V8.2 M3 5.6 H8.2" stroke="#fff" stroke-width="1.3"/></svg>
<div style="position:absolute;left:546.8px;top:224.6px;width:6.8px;height:6.8px;background:#fff;border:0.9px solid #a6c8f0;border-radius:1.6px;box-sizing:border-box"></div>
<svg style="position:absolute;left:547.9px;top:225.9px;" width="5" height="4.5" viewBox="0 0 5 4.5" fill="none"><path d="M0.4 2.3 L1.9 3.8 L4.6 0.7" stroke="#2a8a2a" stroke-width="1.15"/></svg>
<div style="position:absolute;left:553.5px;top:227.5px;width:19px;height:1px;background:#7dbb7d;"></div>
<svg style="position:absolute;left:571.5px;top:225px;" width="6" height="5.5" viewBox="0 0 6 5.5" fill="none"><path d="M0 0 L5.5 2.75 L0 5.5 Z" fill="#2e8b3e"/></svg>
<div style="position:absolute;left:577px;top:209.2px;width:100px;height:43.2px;background:#fff;border:1px solid #e1e1e1;border-radius:2px;box-sizing:border-box;box-shadow:0 0.5px 1.5px rgba(0,0,0,0.08)"></div>
<div style="position:absolute;left:577px;top:209.2px;width:100px;height:14.4px;background:#e6e6e6;border-radius:2px 2px 0 0"></div>
<svg style="position:absolute;left:667px;top:212.4px;" width="8" height="8" viewBox="0 0 8 8" fill="none"><circle cx="4" cy="4" r="4" fill="#57a300"/><path d="M2.0 4.08 L3.4 5.52 L6.0 2.6" stroke="#fff" stroke-width="1.20" stroke-linecap="round" stroke-linejoin="round"/></svg>
<div style="position:absolute;left:677.6px;top:224.6px;width:6.8px;height:6.8px;background:#fff;border:0.9px solid #a6c8f0;border-radius:1.6px;box-sizing:border-box"></div>
<svg style="position:absolute;left:678.7px;top:225.9px;" width="5" height="4.5" viewBox="0 0 5 4.5" fill="none"><path d="M0.4 2.3 L1.9 3.8 L4.6 0.7" stroke="#2a8a2a" stroke-width="1.15"/></svg>
<svg style="position:absolute;left:584.6px;top:230.3px;" width="12.5" height="14" viewBox="0 0 12.5 14" fill="none"><rect x="1.5" y="0.3" width="10.8" height="13.4" rx="0.8" fill="#1a6fd0"/><rect x="4" y="2" width="6" height="1.6" fill="#8fd1f7"/><path d="M0.4 2.5 H2.4 M0.4 5 H2.4 M0.4 7.5 H2.4 M0.4 10 H2.4" stroke="#1a6fd0" stroke-width="0.7"/></svg>
<div style="position:absolute;left:816px;top:136.5px;width:16.2px;height:15.7px;background:#fff;box-shadow:0 0.6px 1.6px rgba(0,0,0,0.22);border-radius:1px"></div>
<svg style="position:absolute;left:816px;top:136.5px;" width="16.2" height="15.7" viewBox="0 0 16.2 15.7" fill="none"><circle cx="9" cy="6.5" r="2.3" stroke="#777" stroke-width="0.7"/><path d="M7.3 8.2 L5 10.5" stroke="#777" stroke-width="0.7"/></svg>
<div style="position:absolute;left:816px;top:157.2px;width:16.2px;height:15.7px;background:#fff;box-shadow:0 0.6px 1.6px rgba(0,0,0,0.22);border-radius:1px"></div>
<svg style="position:absolute;left:816px;top:157.2px;" width="16.2" height="15.7" viewBox="0 0 16.2 15.7" fill="none"><path d="M8.1 4 V11.7 M4.2 7.85 H12" stroke="#777" stroke-width="0.7"/></svg>
<div style="position:absolute;left:823.2px;top:173px;width:1.6px;height:51.8px;background:#6b6b6b;"></div>
<div style="position:absolute;left:819.7px;top:199px;width:8.6px;height:8.6px;border-radius:50%;background:#fff;border:1.1px solid #6b6b6b;box-sizing:border-box"></div>
<div style="position:absolute;left:816px;top:225px;width:16.2px;height:15.7px;background:#fff;box-shadow:0 0.6px 1.6px rgba(0,0,0,0.22);border-radius:1px"></div>
<svg style="position:absolute;left:816px;top:225px;" width="16.2" height="15.7" viewBox="0 0 16.2 15.7" fill="none"><path d="M4.5 7.85 H11.7" stroke="#999" stroke-width="0.7"/></svg>
<div style="position:absolute;left:816px;top:246px;width:16.2px;height:15.7px;background:#fff;box-shadow:0 0.6px 1.6px rgba(0,0,0,0.22);border-radius:1px"></div>
<svg style="position:absolute;left:816px;top:246px;" width="16.2" height="15.7" viewBox="0 0 16.2 15.7" fill="none"><rect x="5.3" y="5" width="5.6" height="5.6" rx="1" stroke="#666" stroke-width="0.6"/><path d="M4 4.5 V3.8 H4.7 M11.5 3.8 H12.2 V4.5 M12.2 11.1 V11.8 H11.5 M4.7 11.8 H4 V11.1" stroke="#444" stroke-width="0.6"/></svg>
<div style="position:absolute;left:816px;top:267px;width:16.2px;height:15.7px;background:#fff;box-shadow:0 0.6px 1.6px rgba(0,0,0,0.22);border-radius:1px"></div>
<svg style="position:absolute;left:816px;top:267px;" width="16.2" height="15.7" viewBox="0 0 16.2 15.7" fill="none"><rect x="4" y="3.8" width="3.2" height="3.2" stroke="#777" stroke-width="0.7"/><rect x="8.8" y="8.7" width="3.2" height="3.2" stroke="#777" stroke-width="0.7"/><path d="M10.4 7 V3.8 M9.3 4.9 L10.4 3.8 L11.5 4.9 M4 10.3 H7.2 M5.6 8.7 V11.9" stroke="#777" stroke-width="0.6"/></svg>
<div style="position:absolute;left:816px;top:288.3px;width:16.2px;height:15.7px;background:#fff;box-shadow:0 0.6px 1.6px rgba(0,0,0,0.22);border-radius:1px"></div>
<svg style="position:absolute;left:816px;top:288.3px;" width="16.2" height="15.7" viewBox="0 0 16.2 15.7" fill="none"><path d="M5 11 L7.6 8.4 M7.6 8.4 H5.8 M7.6 8.4 V10.2 M11.2 4.6 L8.6 7.2 M8.6 7.2 H10.4 M8.6 7.2 V5.4" stroke="#555" stroke-width="0.7"/></svg>
<div style="position:absolute;left:837px;top:130.5px;width:0.9px;height:411.5px;background:#e6e6e6;"></div>
<div style="position:absolute;left:837.9px;top:173.5px;width:164px;height:0.8px;background:#ececec;"></div>
<div style="position:absolute;left:854.4px;top:172.6px;width:25.7px;height:1.4px;background:#1a6fd0;border-radius:1px"></div>
<div style="position:absolute;left:850.2px;top:191.4px;width:139.3px;height:12.3px;background:#fff;border:1px solid #a8a8a8;border-radius:2px;box-sizing:border-box"></div>
<div style="position:absolute;left:850.2px;top:223.9px;width:139.3px;height:31.9px;background:#fff;border:1px solid #a8a8a8;border-radius:2px;box-sizing:border-box"></div>
<svg style="position:absolute;left:855px;top:243.5px;" width="8" height="2" viewBox="0 0 8 2" fill="none"><path d="M0 1.5 L1 0.5 L2 1.5 L3 0.5 L4 1.5 L5 0.5 L6 1.5 L7 0.5" stroke="#d13438" stroke-width="0.6"/></svg>
<svg style="position:absolute;left:985px;top:251px;" width="4" height="4" viewBox="0 0 4 4" fill="none"><path d="M3.5 0.5 L0.5 3.5 M3.5 2 L2 3.5" stroke="#999" stroke-width="0.5"/></svg>
<svg style="position:absolute;left:854.9px;top:281.2px;" width="7.4" height="7.4" viewBox="0 0 7.4 7.4" fill="none"><path d="M3.7 0 V7.4 M0 3.7 H7.4" stroke="#2b78d4" stroke-width="0.8"/></svg>
<div style="position:absolute;left:292.2px;top:333px;width:545px;height:0.9px;background:#e1e1e1;"></div>
<div style="position:absolute;left:560.5px;top:332.7px;width:9px;height:1.4px;background:#333;"></div>
<div style="position:absolute;left:432.8px;top:353.2px;width:23.6px;height:1.4px;background:#1a6fd0;border-radius:1px"></div>
<div style="position:absolute;left:292.2px;top:354.3px;width:545px;height:0.8px;background:#ececec;"></div>
<svg style="position:absolute;left:824.4px;top:343.8px;" width="8" height="5" viewBox="0 0 8 5" fill="none"><path d="M0.5 4.3 L4 0.8 L7.5 4.3" stroke="#888" stroke-width="0.8"/></svg>
<svg style="position:absolute;left:504.4px;top:367.5px;" width="9" height="6" viewBox="0 0 9 6" fill="none"><rect x="0.5" y="0.5" width="8" height="5" rx="1.5" stroke="#aaa" stroke-width="0.7"/><path d="M3 0.5 V5.5 M6 0.5 V5.5" stroke="#aaa" stroke-width="0.7"/></svg>
<svg style="position:absolute;left:522.6px;top:367.2px;" width="9" height="9" viewBox="0 0 9 9" fill="none"><path d="M6.8 1.4 A3.7 3.7 0 1 1 3 0.9" stroke="#2b78d4" stroke-width="0.9"/></svg>
<svg style="position:absolute;left:537.8px;top:368.2px;" width="6.4" height="6.4" viewBox="0 0 6.4 6.4" fill="none"><circle cx="3.2" cy="3.2" r="2.8" stroke="#888" stroke-width="0.6"/><path d="M3.2 2.6 V4.8" stroke="#888" stroke-width="0.6"/><circle cx="3.2" cy="1.6" r="0.35" fill="#888"/></svg>
<svg style="position:absolute;left:639.4px;top:367.4px;" width="8.2" height="8.2" viewBox="0 0 8.2 8.2" fill="none"><circle cx="4.1" cy="4.1" r="4.1" fill="#57a300"/><path d="M2.05 4.1819999999999995 L3.4849999999999994 5.6579999999999995 L6.1499999999999995 2.665" stroke="#fff" stroke-width="1.23" stroke-linecap="round" stroke-linejoin="round"/></svg>
<svg style="position:absolute;left:348.3px;top:391.6px;" width="5" height="3" viewBox="0 0 5 3" fill="none"><path d="M0.3 0.3 L2.5 2.5 L4.7 0.3" stroke="#777" stroke-width="0.7"/></svg>
<svg style="position:absolute;left:383.6px;top:391.6px;" width="5" height="3" viewBox="0 0 5 3" fill="none"><path d="M0.3 0.3 L2.5 2.5 L4.7 0.3" stroke="#777" stroke-width="0.7"/></svg>
<svg style="position:absolute;left:742.2px;top:389.2px;" width="6.5" height="6.5" viewBox="0 0 6.5 6.5" fill="none"><path d="M2.8 0.5 H0.5 V6 H6 V3.7 M3.8 0.5 H6 V2.7 M6 0.5 L3 3.5" stroke="#2b78d4" stroke-width="0.6"/></svg>
<svg style="position:absolute;left:754.6px;top:388px;" width="6" height="8.5" viewBox="0 0 6 8.5" fill="none"><path d="M3 0 V6.5 M0.8 4.3 L3 6.5 L5.2 4.3 M0.3 8 H5.7" stroke="#2b78d4" stroke-width="0.8"/></svg>
<div style="position:absolute;left:810.2px;top:388px;width:0.8px;height:9px;background:#c8c8c8;"></div>
<svg style="position:absolute;left:815.5px;top:390.2px;" width="6.3" height="3.6" viewBox="0 0 6.3 3.6" fill="none"><path d="M0.4 0.4 L3.15 3.2 L5.9 0.4" stroke="#555" stroke-width="0.8"/></svg>
<svg style="position:absolute;left:361px;top:426.5px;" width="7" height="6" viewBox="0 0 7 6" fill="none"><path d="M1.8 5.5 V0.6 M0.4 2 L1.8 0.6 L3.2 2 M5.2 0.5 V5.4 M3.8 4 L5.2 5.4 L6.6 4" stroke="#444" stroke-width="0.7"/></svg>
<svg style="position:absolute;left:466.3px;top:426.5px;" width="7" height="6" viewBox="0 0 7 6" fill="none"><path d="M1.8 5.5 V0.6 M0.4 2 L1.8 0.6 L3.2 2 M5.2 0.5 V5.4 M3.8 4 L5.2 5.4 L6.6 4" stroke="#444" stroke-width="0.7"/></svg>
<svg style="position:absolute;left:537px;top:426.5px;" width="7" height="6" viewBox="0 0 7 6" fill="none"><path d="M1.8 5.5 V0.6 M0.4 2 L1.8 0.6 L3.2 2 M5.2 0.5 V5.4 M3.8 4 L5.2 5.4 L6.6 4" stroke="#444" stroke-width="0.7"/></svg>
<svg style="position:absolute;left:601px;top:426.5px;" width="7" height="6" viewBox="0 0 7 6" fill="none"><path d="M1.8 5.5 V0.6 M0.4 2 L1.8 0.6 L3.2 2 M5.2 0.5 V5.4 M3.8 4 L5.2 5.4 L6.6 4" stroke="#444" stroke-width="0.7"/></svg>
<svg style="position:absolute;left:675px;top:426.5px;" width="7" height="6" viewBox="0 0 7 6" fill="none"><path d="M1.8 5.5 V0.6 M0.4 2 L1.8 0.6 L3.2 2 M5.2 0.5 V5.4 M3.8 4 L5.2 5.4 L6.6 4" stroke="#444" stroke-width="0.7"/></svg>
<div style="position:absolute;left:304.5px;top:438.3px;width:522.5px;height:0.8px;background:#e8e8e8;"></div>
<div style="position:absolute;left:304.5px;top:455.3px;width:522.5px;height:0.8px;background:#e8e8e8;"></div>
<div style="position:absolute;left:304.5px;top:472.1px;width:522.5px;height:0.8px;background:#e8e8e8;"></div>
<div style="position:absolute;left:304.5px;top:488.3px;width:522.5px;height:0.8px;background:#e8e8e8;"></div>
<svg style="position:absolute;left:415.2px;top:442.7px;" width="8" height="8" viewBox="0 0 8 8" fill="none"><circle cx="4" cy="4" r="4" fill="#57a300"/><path d="M2.0 4.08 L3.4 5.52 L6.0 2.6" stroke="#fff" stroke-width="1.20" stroke-linecap="round" stroke-linejoin="round"/></svg>
<svg style="position:absolute;left:415.2px;top:459.6px;" width="8" height="8" viewBox="0 0 8 8" fill="none"><circle cx="4" cy="4" r="4" fill="#57a300"/><path d="M2.0 4.08 L3.4 5.52 L6.0 2.6" stroke="#fff" stroke-width="1.20" stroke-linecap="round" stroke-linejoin="round"/></svg>
<svg style="position:absolute;left:415.2px;top:476.2px;" width="8" height="8" viewBox="0 0 8 8" fill="none"><circle cx="4" cy="4" r="4" fill="#57a300"/><path d="M2.0 4.08 L3.4 5.52 L6.0 2.6" stroke="#fff" stroke-width="1.20" stroke-linecap="round" stroke-linejoin="round"/></svg>
<span style="left:88px;top:3.40px;font-size:8.1px;line-height:11px;font-weight:400;color:#262626;letter-spacing:0.000px;transform:scaleX(0.7786);transform-origin:0 0;">bmt-dwh-uks-syn-prd - Azure Sy</span>
<span style="left:100.9px;top:21.60px;font-size:8.1px;line-height:11px;font-weight:400;color:#707070;letter-spacing:0.000px;transform:scaleX(0.8901);transform-origin:0 0;">https://<b style="font-weight:400;color:#1a1a1a">web.azuresynapse.net</b>/en/authoring/orchestrate/pipeline/Check_views_count?workspace=%2Fsubscriptions%2F64803e3f-eff2-4c7e-8b0b-cde7fee373a0%2FresourceGroups%2FBMT-DWH-UK...</span>
<span style="left:753px;top:21.60px;font-size:8.1px;line-height:11px;font-weight:400;color:#444;letter-spacing:0.000px;">A</span>
<span style="left:759px;top:22.00px;font-size:4.32px;line-height:6px;font-weight:400;color:#444;letter-spacing:0.000px;">a</span>
<span style="left:803.3px;top:24.30px;font-size:3.89px;line-height:5px;font-weight:700;color:#fff;letter-spacing:0.000px;">ABP</span>
<span style="left:18.7px;top:40.00px;font-size:8.1px;line-height:11px;font-weight:400;color:#262626;letter-spacing:0.000px;transform:scaleX(0.7637);transform-origin:0 0;">Data engineer - GO...</span>
<span style="left:98.4px;top:40.00px;font-size:8.1px;line-height:11px;font-weight:400;color:#262626;letter-spacing:0.000px;transform:scaleX(0.7295);transform-origin:0 0;">Success Profiles - Ci...</span>
<span style="left:178.8px;top:40.00px;font-size:8.1px;line-height:11px;font-weight:400;color:#262626;letter-spacing:0.000px;transform:scaleX(0.7761);transform-origin:0 0;">mybmt | Dashboard</span>
<span style="left:254.5px;top:40.00px;font-size:8.1px;line-height:11px;font-weight:400;color:#262626;letter-spacing:0.000px;transform:scaleX(0.7335);transform-origin:0 0;">BMT UK SharePoint...</span>
<span style="left:333.9px;top:40.00px;font-size:8.1px;line-height:11px;font-weight:400;color:#262626;letter-spacing:0.000px;transform:scaleX(0.7429);transform-origin:0 0;">NAVIGATOR - Home</span>
<span style="left:411.6px;top:40.00px;font-size:8.1px;line-height:11px;font-weight:400;color:#262626;letter-spacing:0.000px;transform:scaleX(0.7782);transform-origin:0 0;">Home - Microsoft A...</span>
<span style="left:492px;top:40.00px;font-size:8.1px;line-height:11px;font-weight:400;color:#262626;letter-spacing:0.000px;transform:scaleX(0.7503);transform-origin:0 0;">Kimball_The-Data-...</span>
<span style="left:568.6px;top:40.00px;font-size:8.1px;line-height:11px;font-weight:400;color:#262626;letter-spacing:0.000px;transform:scaleX(0.7301);transform-origin:0 0;">python - &quot;SSL: CERT...</span>
<span style="left:649.3px;top:40.00px;font-size:8.1px;line-height:11px;font-weight:400;color:#262626;letter-spacing:0.000px;transform:scaleX(0.7277);transform-origin:0 0;">Power BI</span>
<span style="left:694.3px;top:40.00px;font-size:8.1px;line-height:11px;font-weight:400;color:#262626;letter-spacing:0.000px;transform:scaleX(0.7691);transform-origin:0 0;">knowhow – Where...</span>
<span style="left:772px;top:40.00px;font-size:8.1px;line-height:11px;font-weight:400;color:#262626;letter-spacing:0.000px;transform:scaleX(0.7760);transform-origin:0 0;">Introduction - Traini...</span>
<span style="left:852px;top:40.00px;font-size:8.1px;line-height:11px;font-weight:400;color:#262626;letter-spacing:0.000px;transform:scaleX(0.7835);transform-origin:0 0;">How To Add Authe...</span>
<span style="left:11px;top:59.75px;font-size:8.64px;line-height:11px;font-weight:700;color:#ffffff;letter-spacing:0.000px;transform:scaleX(0.8665);transform-origin:0 0;">Microsoft Azure</span>
<span style="left:82.5px;top:59.60px;font-size:8.1px;line-height:11px;font-weight:400;color:#ffffff;letter-spacing:0.000px;transform:scaleX(0.8601);transform-origin:0 0;">Synapse Analytics</span>
<span style="left:155px;top:59.60px;font-size:8.1px;line-height:11px;font-weight:400;color:#ffffff;letter-spacing:0.000px;transform:scaleX(0.9340);transform-origin:0 0;">bmt-dwh-uks-syn-prd</span>
<span style="left:436.8px;top:60.20px;font-size:8.1px;line-height:11px;font-weight:400;color:#2d4d78;letter-spacing:0.000px;transform:scaleX(0.7990);transform-origin:0 0;">Search</span>
<span style="left:824.6px;top:58.20px;font-size:5.4px;line-height:7px;font-weight:700;color:#1d6fd0;letter-spacing:0.000px;">1</span>
<span style="left:860.5px;top:58.30px;font-size:10.26px;line-height:13px;font-weight:400;color:#ffffff;letter-spacing:0.000px;">?</span>
<span style="left:905.9px;top:57.30px;font-size:8.1px;line-height:11px;font-weight:400;color:#ffffff;letter-spacing:0.000px;transform:scaleX(0.8999);transform-origin:0 0;">Ali.Ahmed@uk.bmt.org</span>
<span style="left:950px;top:67.30px;font-size:5.4px;line-height:7px;font-weight:700;color:#ffffff;letter-spacing:0.000px;transform:scaleX(0.8626);transform-origin:0 0;">BMT GLOBAL</span>
<span style="left:52.1px;top:79.80px;font-size:8.1px;line-height:11px;font-weight:400;color:#555;letter-spacing:0.000px;transform:scaleX(0.7995);transform-origin:0 0;">Synapse live</span>
<span style="left:133px;top:79.80px;font-size:8.1px;line-height:11px;font-weight:400;color:#323130;letter-spacing:0.000px;transform:scaleX(0.8385);transform-origin:0 0;">Validate all</span>
<span style="left:187.7px;top:79.80px;font-size:8.1px;line-height:11px;font-weight:400;color:#a19f9d;letter-spacing:0.000px;transform:scaleX(0.8075);transform-origin:0 0;">Publish all</span>
<span style="left:35.8px;top:100.10px;font-size:10.26px;line-height:13px;font-weight:700;color:#242424;letter-spacing:0.000px;transform:scaleX(0.8915);transform-origin:0 0;">Integrate</span>
<span style="left:48.9px;top:121.00px;font-size:8.1px;line-height:11px;font-weight:400;color:#707070;letter-spacing:0.000px;transform:scaleX(0.8195);transform-origin:0 0;">Filter resources by name</span>
<span style="left:48.6px;top:139.40px;font-size:8.1px;line-height:11px;font-weight:400;color:#323130;letter-spacing:0.000px;transform:scaleX(0.8825);transform-origin:0 0;-webkit-text-stroke:0.12px currentColor;">Pipelines</span>
<span style="left:169.2px;top:139.40px;font-size:8.1px;line-height:11px;font-weight:400;color:#323130;letter-spacing:0.000px;transform:scaleX(0.7099);transform-origin:0 0;">70</span>
<span style="left:65.1px;top:156.30px;font-size:8.1px;line-height:11px;font-weight:400;color:#3b3a39;letter-spacing:0.000px;transform:scaleX(0.8148);transform-origin:0 0;">Archive</span>
<span style="left:65.1px;top:173.40px;font-size:8.1px;line-height:11px;font-weight:400;color:#3b3a39;letter-spacing:0.000px;transform:scaleX(0.8264);transform-origin:0 0;">Customer</span>
<span style="left:65.1px;top:189.90px;font-size:8.1px;line-height:11px;font-weight:400;color:#3b3a39;letter-spacing:0.000px;transform:scaleX(0.8183);transform-origin:0 0;">Gold</span>
<span style="left:75.1px;top:206.70px;font-size:8.1px;line-height:11px;font-weight:400;color:#3b3a39;letter-spacing:0.000px;transform:scaleX(0.8331);transform-origin:0 0;">Comparison_validation</span>
<span style="left:75.1px;top:223.40px;font-size:8.1px;line-height:11px;font-weight:400;color:#3b3a39;letter-spacing:0.000px;transform:scaleX(0.8295);transform-origin:0 0;">Continous_Integration_Testing</span>
<span style="left:81.8px;top:240.20px;font-size:8.1px;line-height:11px;font-weight:400;color:#3b3a39;letter-spacing:0.000px;transform:scaleX(0.7974);transform-origin:0 0;">Check_views_count</span>
<span style="left:81.8px;top:257.10px;font-size:8.1px;line-height:11px;font-weight:400;color:#3b3a39;letter-spacing:0.000px;transform:scaleX(0.7887);transform-origin:0 0;">Create_Snapshots_to_Gold</span>
<span style="left:81.8px;top:273.90px;font-size:8.1px;line-height:11px;font-weight:400;color:#3b3a39;letter-spacing:0.000px;transform:scaleX(0.7713);transform-origin:0 0;">Load_Snapshots_to_SQL</span>
<span style="left:75.1px;top:290.40px;font-size:8.1px;line-height:11px;font-weight:400;color:#3b3a39;letter-spacing:0.000px;transform:scaleX(0.7983);transform-origin:0 0;">Snapshot_spark</span>
<span style="left:75.1px;top:307.20px;font-size:8.1px;line-height:11px;font-weight:400;color:#3b3a39;letter-spacing:0.000px;transform:scaleX(0.7863);transform-origin:0 0;">Snapshot_Synapse</span>
<span style="left:65.1px;top:324.20px;font-size:8.1px;line-height:11px;font-weight:400;color:#3b3a39;letter-spacing:0.000px;transform:scaleX(0.8801);transform-origin:0 0;">Medallion</span>
<span style="left:65.1px;top:340.70px;font-size:8.1px;line-height:11px;font-weight:400;color:#3b3a39;letter-spacing:0.000px;transform:scaleX(0.8050);transform-origin:0 0;">Sample</span>
<span style="left:205.3px;top:98.40px;font-size:8.1px;line-height:11px;font-weight:400;color:#1b1b1b;letter-spacing:0.000px;transform:scaleX(0.7571);transform-origin:0 0;-webkit-text-stroke:0.25px currentColor;">Check_views_count</span>
<span style="left:193.4px;top:116.60px;font-size:10.26px;line-height:13px;font-weight:700;color:#242424;letter-spacing:0.000px;transform:scaleX(0.8337);transform-origin:0 0;">Activities</span>
<span style="left:206.9px;top:136.00px;font-size:8.1px;line-height:11px;font-weight:400;color:#707070;letter-spacing:0.000px;transform:scaleX(0.7975);transform-origin:0 0;">Search activities</span>
<span style="left:203.9px;top:154.00px;font-size:8.1px;line-height:11px;font-weight:400;color:#323130;letter-spacing:0.000px;transform:scaleX(0.7873);transform-origin:0 0;-webkit-text-stroke:0.12px currentColor;">Synapse</span>
<span style="left:203.9px;top:171.10px;font-size:8.1px;line-height:11px;font-weight:400;color:#323130;letter-spacing:0.000px;transform:scaleX(0.8641);transform-origin:0 0;-webkit-text-stroke:0.12px currentColor;">Move and transform</span>
<span style="left:203.9px;top:188.50px;font-size:8.1px;line-height:11px;font-weight:400;color:#323130;letter-spacing:0.000px;transform:scaleX(0.8328);transform-origin:0 0;-webkit-text-stroke:0.12px currentColor;">Azure Data Explorer</span>
<span style="left:203.9px;top:205.70px;font-size:8.1px;line-height:11px;font-weight:400;color:#323130;letter-spacing:0.000px;transform:scaleX(0.8468);transform-origin:0 0;-webkit-text-stroke:0.12px currentColor;">Azure Function</span>
<span style="left:203.9px;top:222.80px;font-size:8.1px;line-height:11px;font-weight:400;color:#323130;letter-spacing:0.000px;transform:scaleX(0.8230);transform-origin:0 0;-webkit-text-stroke:0.12px currentColor;">Batch Service</span>
<span style="left:203.9px;top:240.10px;font-size:8.1px;line-height:11px;font-weight:400;color:#323130;letter-spacing:0.000px;transform:scaleX(0.8396);transform-origin:0 0;-webkit-text-stroke:0.12px currentColor;">Databricks</span>
<span style="left:203.9px;top:257.40px;font-size:8.1px;line-height:11px;font-weight:400;color:#323130;letter-spacing:0.000px;transform:scaleX(0.8341);transform-origin:0 0;-webkit-text-stroke:0.12px currentColor;">Data Lake Analytics</span>
<span style="left:203.9px;top:274.70px;font-size:8.1px;line-height:11px;font-weight:400;color:#323130;letter-spacing:0.000px;transform:scaleX(0.8126);transform-origin:0 0;-webkit-text-stroke:0.12px currentColor;">General</span>
<span style="left:203.9px;top:291.90px;font-size:8.1px;line-height:11px;font-weight:400;color:#323130;letter-spacing:0.000px;transform:scaleX(0.8636);transform-origin:0 0;-webkit-text-stroke:0.12px currentColor;">HDInsight</span>
<span style="left:203.9px;top:309.20px;font-size:8.1px;line-height:11px;font-weight:400;color:#323130;letter-spacing:0.000px;transform:scaleX(0.8865);transform-origin:0 0;-webkit-text-stroke:0.12px currentColor;">Iteration &amp; conditionals</span>
<span style="left:203.9px;top:326.50px;font-size:8.1px;line-height:11px;font-weight:400;color:#323130;letter-spacing:0.000px;transform:scaleX(0.8455);transform-origin:0 0;-webkit-text-stroke:0.12px currentColor;">Machine Learning</span>
<span style="left:314.5px;top:116.20px;font-size:8.1px;line-height:11px;font-weight:400;color:#323130;letter-spacing:0.000px;transform:scaleX(0.8201);transform-origin:0 0;">Validate</span>
<span style="left:361.2px;top:116.20px;font-size:8.1px;line-height:11px;font-weight:400;color:#323130;letter-spacing:0.000px;transform:scaleX(0.8299);transform-origin:0 0;">Debug</span>
<span style="left:402.2px;top:116.20px;font-size:8.1px;line-height:11px;font-weight:400;color:#323130;letter-spacing:0.000px;transform:scaleX(0.8057);transform-origin:0 0;">Trigger (1)</span>
<span style="left:953.5px;top:113.60px;font-size:10.8px;line-height:14px;font-weight:400;color:#4d8fdb;letter-spacing:0.000px;transform:scaleX(0.8318);transform-origin:0 0;">{ }</span>
<span style="left:449.3px;top:146.70px;font-size:8.1px;line-height:11px;font-weight:400;color:#323130;letter-spacing:0.000px;transform:scaleX(0.9108);transform-origin:0 0;">If Condition</span>
<span style="left:472.9px;top:165.80px;font-size:8.1px;line-height:11px;font-weight:400;color:#323130;letter-spacing:0.000px;transform:scaleX(0.8591);transform-origin:0 0;">If Workspace Is Dev</span>
<span style="left:453.4px;top:195.40px;font-size:6.48px;line-height:9px;font-weight:400;color:#222;letter-spacing:0.000px;transform:scaleX(0.8880);transform-origin:0 0;">True</span>
<span style="left:465.3px;top:213.40px;font-size:9.72px;line-height:13px;font-weight:400;color:#8a8a8a;letter-spacing:0.000px;font-family:"Liberation Serif",serif;">(</span>
<span style="left:468.6px;top:212.40px;font-size:9.72px;line-height:13px;font-weight:400;color:#2b78d4;letter-spacing:0.000px;font-family:"Liberation Serif",serif;font-style:italic;">x</span>
<span style="left:474.5px;top:213.40px;font-size:9.72px;line-height:13px;font-weight:400;color:#8a8a8a;letter-spacing:0.000px;font-family:"Liberation Serif",serif;">)</span>
<span style="left:459.8px;top:226.30px;font-size:5.4px;line-height:7px;font-weight:400;color:#444;letter-spacing:0.000px;transform:scaleX(0.9266);transform-origin:0 0;">Set</span>
<span style="left:459.8px;top:232.50px;font-size:5.4px;line-height:7px;font-weight:400;color:#444;letter-spacing:0.000px;transform:scaleX(0.9037);transform-origin:0 0;">KeyVault...</span>
<span style="left:453.4px;top:257.90px;font-size:6.48px;line-height:9px;font-weight:400;color:#222;letter-spacing:0.000px;transform:scaleX(0.8592);transform-origin:0 0;">False</span>
<span style="left:465.3px;top:275.90px;font-size:9.72px;line-height:13px;font-weight:400;color:#8a8a8a;letter-spacing:0.000px;font-family:"Liberation Serif",serif;">(</span>
<span style="left:468.6px;top:274.90px;font-size:9.72px;line-height:13px;font-weight:400;color:#2b78d4;letter-spacing:0.000px;font-family:"Liberation Serif",serif;font-style:italic;">x</span>
<span style="left:474.5px;top:275.90px;font-size:9.72px;line-height:13px;font-weight:400;color:#8a8a8a;letter-spacing:0.000px;font-family:"Liberation Serif",serif;">)</span>
<span style="left:459.8px;top:288.80px;font-size:5.4px;line-height:7px;font-weight:400;color:#444;letter-spacing:0.000px;transform:scaleX(0.9266);transform-origin:0 0;">Set</span>
<span style="left:459.8px;top:295.00px;font-size:5.4px;line-height:7px;font-weight:400;color:#444;letter-spacing:0.000px;transform:scaleX(0.9037);transform-origin:0 0;">KeyVault...</span>
<span style="left:579.8px;top:211.50px;font-size:8.1px;line-height:11px;font-weight:400;color:#323130;letter-spacing:0.000px;transform:scaleX(0.9291);transform-origin:0 0;">Notebook</span>
<span style="left:603px;top:231.50px;font-size:8.1px;line-height:11px;font-weight:400;color:#323130;letter-spacing:0.000px;transform:scaleX(0.8859);transform-origin:0 0;">Check view count</span>
<span style="left:850.5px;top:137.40px;font-size:8.1px;line-height:11px;font-weight:700;color:#242424;letter-spacing:0.000px;transform:scaleX(0.8815);transform-origin:0 0;">Properties</span>
<span style="left:854.4px;top:160.00px;font-size:8.1px;line-height:11px;font-weight:400;color:#323130;letter-spacing:0.000px;transform:scaleX(0.8925);transform-origin:0 0;">General</span>
<span style="left:892.6px;top:160.00px;font-size:8.1px;line-height:11px;font-weight:400;color:#605e5c;letter-spacing:0.000px;transform:scaleX(0.8665);transform-origin:0 0;">Related (1)</span>
<span style="left:850.5px;top:179.80px;font-size:8.1px;line-height:11px;font-weight:400;color:#323130;letter-spacing:0.000px;transform:scaleX(0.8243);transform-origin:0 0;-webkit-text-stroke:0.12px currentColor;">Name</span>
<span style="left:871.8px;top:179.80px;font-size:8.1px;line-height:11px;font-weight:400;color:#d13438;letter-spacing:0.000px;">*</span>
<span style="left:854.9px;top:193.00px;font-size:8.1px;line-height:11px;font-weight:400;color:#323130;letter-spacing:0.000px;transform:scaleX(0.7932);transform-origin:0 0;">Check_views_count</span>
<span style="left:850.5px;top:212.80px;font-size:8.1px;line-height:11px;font-weight:400;color:#323130;letter-spacing:0.000px;transform:scaleX(0.8568);transform-origin:0 0;-webkit-text-stroke:0.12px currentColor;">Description</span>
<span style="left:854.9px;top:225.90px;font-size:8.1px;line-height:11px;font-weight:400;color:#323130;letter-spacing:0.000px;transform:scaleX(0.8484);transform-origin:0 0;">Verify the functionality of all views in the</span>
<span style="left:854.9px;top:235.00px;font-size:8.1px;line-height:11px;font-weight:400;color:#323130;letter-spacing:0.000px;transform:scaleX(0.8287);transform-origin:0 0;">GL Data Warehouse and retrieve the record</span>
<span style="left:854.9px;top:243.90px;font-size:8.1px;line-height:11px;font-weight:400;color:#323130;letter-spacing:0.000px;transform:scaleX(0.8521);transform-origin:0 0;">count.</span>
<span style="left:850.5px;top:263.60px;font-size:8.1px;line-height:11px;font-weight:400;color:#323130;letter-spacing:0.000px;transform:scaleX(0.8772);transform-origin:0 0;-webkit-text-stroke:0.12px currentColor;">Annotations</span>
<span style="left:867px;top:280.10px;font-size:8.1px;line-height:11px;font-weight:400;color:#323130;letter-spacing:0.000px;transform:scaleX(0.8332);transform-origin:0 0;">New</span>
<span style="left:304.6px;top:340.90px;font-size:8.1px;line-height:11px;font-weight:400;color:#605e5c;letter-spacing:0.000px;transform:scaleX(0.8460);transform-origin:0 0;">Parameters</span>
<span style="left:353px;top:340.90px;font-size:8.1px;line-height:11px;font-weight:400;color:#605e5c;letter-spacing:0.000px;transform:scaleX(0.8505);transform-origin:0 0;">Variables</span>
<span style="left:394.3px;top:340.90px;font-size:8.1px;line-height:11px;font-weight:400;color:#605e5c;letter-spacing:0.000px;transform:scaleX(0.8752);transform-origin:0 0;">Settings</span>
<span style="left:432.8px;top:340.90px;font-size:8.1px;line-height:11px;font-weight:400;color:#323130;letter-spacing:0.000px;transform:scaleX(0.9707);transform-origin:0 0;">Output</span>
<span style="left:304.6px;top:366.90px;font-size:8.1px;line-height:11px;font-weight:700;color:#242424;letter-spacing:0.000px;transform:scaleX(0.8859);transform-origin:0 0;">Pipeline run ID:</span>
<span style="left:363.2px;top:366.80px;font-size:8.1px;line-height:11px;font-weight:400;color:#323130;letter-spacing:0.000px;transform:scaleX(0.8836);transform-origin:0 0;">18bbaa64-3327-4a3b-aea1-1752c43abc6e</span>
<span style="left:583.8px;top:366.90px;font-size:8.1px;line-height:11px;font-weight:700;color:#242424;letter-spacing:0.000px;transform:scaleX(0.8648);transform-origin:0 0;">Pipeline status</span>
<span style="left:654.4px;top:366.90px;font-size:8.1px;line-height:11px;font-weight:400;color:#323130;letter-spacing:0.000px;transform:scaleX(0.8540);transform-origin:0 0;">Succeeded</span>
<span style="left:732.2px;top:366.50px;font-size:8.1px;line-height:11px;font-weight:400;color:#2b78d4;letter-spacing:0.000px;transform:scaleX(0.8710);transform-origin:0 0;">View debug run consumption</span>
<span style="left:313.9px;top:388.50px;font-size:7.88px;line-height:10px;font-weight:400;color:#323130;letter-spacing:0.000px;transform:scaleX(0.8732);transform-origin:0 0;-webkit-text-stroke:0.12px currentColor;">All status</span>
<span style="left:366.9px;top:388.50px;font-size:7.88px;line-height:10px;font-weight:400;color:#323130;letter-spacing:0.000px;transform:scaleX(0.8642);transform-origin:0 0;-webkit-text-stroke:0.12px currentColor;">List</span>
<span style="left:671.3px;top:387.40px;font-size:8.1px;line-height:11px;font-weight:400;color:#2b78d4;letter-spacing:0.000px;transform:scaleX(0.7902);transform-origin:0 0;">Monitor in Azure Metrics</span>
<span style="left:764.5px;top:387.40px;font-size:8.1px;line-height:11px;font-weight:400;color:#323130;letter-spacing:0.000px;transform:scaleX(0.8032);transform-origin:0 0;">Export to CSV</span>
<span style="left:308.7px;top:406.50px;font-size:7.88px;line-height:10px;font-weight:400;color:#605e5c;letter-spacing:0.000px;transform:scaleX(0.8641);transform-origin:0 0;">Showing 1 - 3 of 3 items</span>
<span style="left:310.8px;top:424.00px;font-size:8.1px;line-height:11px;font-weight:400;color:#323130;letter-spacing:0.000px;transform:scaleX(0.8724);transform-origin:0 0;-webkit-text-stroke:0.12px currentColor;">Activity name</span>
<span style="left:415px;top:424.00px;font-size:8.1px;line-height:11px;font-weight:400;color:#323130;letter-spacing:0.000px;transform:scaleX(0.8811);transform-origin:0 0;-webkit-text-stroke:0.12px currentColor;">Activity status</span>
<span style="left:489.9px;top:424.00px;font-size:8.1px;line-height:11px;font-weight:400;color:#323130;letter-spacing:0.000px;transform:scaleX(0.8915);transform-origin:0 0;-webkit-text-stroke:0.12px currentColor;">Activity type</span>
<span style="left:564.6px;top:424.00px;font-size:8.1px;line-height:11px;font-weight:400;color:#323130;letter-spacing:0.000px;transform:scaleX(0.8495);transform-origin:0 0;-webkit-text-stroke:0.12px currentColor;">Run start</span>
<span style="left:639.4px;top:424.00px;font-size:8.1px;line-height:11px;font-weight:400;color:#323130;letter-spacing:0.000px;transform:scaleX(0.8695);transform-origin:0 0;-webkit-text-stroke:0.12px currentColor;">Duration</span>
<span style="left:714.1px;top:424.00px;font-size:8.1px;line-height:11px;font-weight:400;color:#323130;letter-spacing:0.000px;transform:scaleX(0.8933);transform-origin:0 0;-webkit-text-stroke:0.12px currentColor;">Integration runtime</span>
<span style="left:789px;top:424.00px;font-size:8.1px;line-height:11px;font-weight:400;color:#323130;letter-spacing:0.000px;transform:scaleX(0.8625);transform-origin:0 0;-webkit-text-stroke:0.12px currentColor;">User propert</span>
<span style="left:310.8px;top:442.00px;font-size:8.1px;line-height:11px;font-weight:400;color:#2b78d4;letter-spacing:0.000px;transform:scaleX(0.8181);transform-origin:0 0;">Check view count</span>
<span style="left:426.3px;top:442.00px;font-size:8.1px;line-height:11px;font-weight:400;color:#323130;letter-spacing:0.000px;transform:scaleX(0.7972);transform-origin:0 0;">Succeeded</span>
<span style="left:489.9px;top:442.00px;font-size:8.1px;line-height:11px;font-weight:400;color:#323130;letter-spacing:0.000px;transform:scaleX(0.8628);transform-origin:0 0;">Notebook</span>
<span style="left:564.6px;top:442.00px;font-size:8.1px;line-height:11px;font-weight:400;color:#323130;letter-spacing:0.000px;transform:scaleX(0.8330);transform-origin:0 0;">7/1/2024, 9:32:15 AM</span>
<span style="left:639.4px;top:442.00px;font-size:8.1px;line-height:11px;font-weight:400;color:#323130;letter-spacing:0.000px;transform:scaleX(0.8137);transform-origin:0 0;">4m 36s</span>
<span style="left:714.1px;top:442.00px;font-size:8.1px;line-height:11px;font-weight:400;color:#323130;letter-spacing:0.000px;transform:scaleX(0.8617);transform-origin:0 0;">AutoResolveIntegration</span>
<span style="left:310.8px;top:458.90px;font-size:8.1px;line-height:11px;font-weight:400;color:#323130;letter-spacing:0.000px;transform:scaleX(0.7783);transform-origin:0 0;">Set KeyVault PRD</span>
<span style="left:426.3px;top:458.90px;font-size:8.1px;line-height:11px;font-weight:400;color:#323130;letter-spacing:0.000px;transform:scaleX(0.7972);transform-origin:0 0;">Succeeded</span>
<span style="left:489.9px;top:458.90px;font-size:8.1px;line-height:11px;font-weight:400;color:#323130;letter-spacing:0.000px;transform:scaleX(0.8164);transform-origin:0 0;">Set variable</span>
<span style="left:564.6px;top:458.90px;font-size:8.1px;line-height:11px;font-weight:400;color:#323130;letter-spacing:0.000px;transform:scaleX(0.8330);transform-origin:0 0;">7/1/2024, 9:32:14 AM</span>
<span style="left:639.4px;top:458.90px;font-size:8.1px;line-height:11px;font-weight:400;color:#323130;letter-spacing:0.000px;transform:scaleX(0.7886);transform-origin:0 0;">Less than 1s</span>
<span style="left:310.8px;top:475.50px;font-size:8.1px;line-height:11px;font-weight:400;color:#323130;letter-spacing:0.000px;transform:scaleX(0.8121);transform-origin:0 0;">If Workspace Is Dev</span>
<span style="left:426.3px;top:475.50px;font-size:8.1px;line-height:11px;font-weight:400;color:#323130;letter-spacing:0.000px;transform:scaleX(0.7972);transform-origin:0 0;">Succeeded</span>
<span style="left:489.9px;top:475.50px;font-size:8.1px;line-height:11px;font-weight:400;color:#323130;letter-spacing:0.000px;transform:scaleX(0.8620);transform-origin:0 0;">If Condition</span>
<span style="left:564.6px;top:475.50px;font-size:8.1px;line-height:11px;font-weight:400;color:#323130;letter-spacing:0.000px;transform:scaleX(0.8330);transform-origin:0 0;">7/1/2024, 9:32:14 AM</span>
<span style="left:639.4px;top:475.50px;font-size:8.1px;line-height:11px;font-weight:400;color:#323130;letter-spacing:0.000px;transform:scaleX(0.7886);transform-origin:0 0;">Less than 1s</span>
<div style="position:absolute;left:166px;top:2px;width:13px;height:12px;background:linear-gradient(90deg,rgba(247,247,247,0),#f7f7f7 85%);"></div>
<div style="position:absolute;left:782.3px;top:443px;width:5px;height:10px;background:#fff;"></div>
<div style="position:absolute;left:828.4px;top:424px;width:8.3px;height:10px;background:#fff;"></div>
</body></html>
